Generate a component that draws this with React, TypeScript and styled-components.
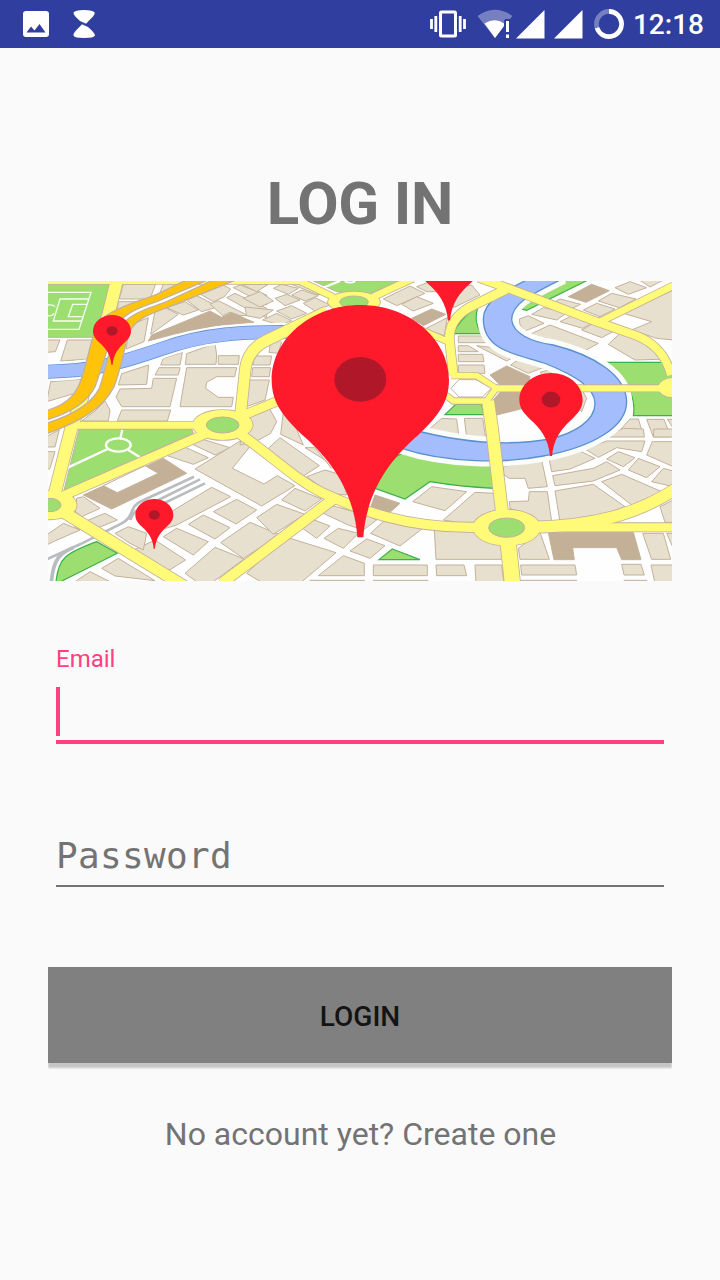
import React from 'react';
import styled, { createGlobalStyle } from 'styled-components';

const GlobalStyle = createGlobalStyle`
  body {
    margin: 0;
    background: #fafafa;
    font-family: Roboto, 'Liberation Sans', sans-serif;
  }
`;

const Screen = styled.div`
  display: flex;
  flex-direction: column;
  width: 720px;
  height: 1280px;
  background: #fafafa;
  overflow: hidden;
`;

const StatusBar = styled.header`
  display: flex;
  align-items: center;
  flex: none;
  height: 48px;
  padding: 0 16px 0 22px;
  box-sizing: border-box;
  background: #303f9f;
  color: #fff;
`;

const StatusIcon = styled.svg<{ $gap?: number }>`
  display: block;
  flex: none;
  margin-right: ${(p) => p.$gap ?? 0}px;
`;

const Spacer = styled.div`
  flex: 1;
`;

const Clock = styled.span`
  font-size: 28px;
  font-weight: 500;
  line-height: 48px;
  padding-top: 2px;
`;

const Form = styled.main`
  display: flex;
  flex-direction: column;
  padding: 116px 48px 0;
`;

const Title = styled.h1`
  margin: 0 0 37px;
  height: 80px;
  line-height: 80px;
  text-align: center;
  font-size: 60px;
  font-weight: 700;
  letter-spacing: -0.2px;
  color: #737373;
`;

const MapPicture = styled.svg`
  display: block;
  width: 624px;
  height: 300px;
`;

const Field = styled.label`
  display: flex;
  flex-direction: column;
  margin: 0 8px;
`;

const FloatingLabel = styled.span`
  margin-top: 64px;
  height: 28px;
  line-height: 28px;
  font-size: 24px;
  color: #ff4081;
`;

const ActiveInput = styled.div`
  height: 53px;
  margin-top: 14px;
  border-bottom: 4px solid #ff4081;
`;

const Caret = styled.div`
  width: 4px;
  height: 49px;
  background: #ff4081;
`;

const IdleInput = styled.div`
  height: 59px;
  margin-top: 82px;
  line-height: 60px;
  border-bottom: 2px solid #737373;
  font-family: 'DejaVu Sans Mono', monospace;
  font-size: 36px;
  letter-spacing: 0.33px;
  color: #737373;
`;

const LoginButton = styled.button`
  height: 96px;
  margin: 80px 0 0;
  padding: 3px 0 0;
  border: 0;
  background: #808080;
  box-shadow: 0 5px 2px 0 rgba(0, 0, 0, 0.21);
  clip-path: inset(0 0 -10px 0);
  font-family: inherit;
  font-size: 28px;
  font-weight: 500;
  color: #141414;
`;

const SignupLink = styled.p`
  margin: 50px 0 0;
  padding-left: 1px;
  line-height: 42px;
  text-align: center;
  font-size: 32px;
  color: #737373;
`;

/* Map drawing: three units per pixel, split in six areas. */

const LAND = '#e8e0cf';
const EDGE = '#c3b19b';
const ROAD = '#fffa78';
const PARK = '#9cdf70';
const PARK_EDGE = '#39b14a';
const BUILDING = '#c4b096';
const WATER = '#a3bdfd';
const WATER_EDGE = '#5b8fd0';
const RAIL = '#b9bdc0';

interface Area {
  x: number;
  y: number;
  blocks: string[];
  buildings: string[];
}

const areas: Area[] = [
  {
    x: 0,
    y: 0,
    blocks: [
      '250,27 347,27 330,72 238,72', '235,80 300,80 232,108', '370,27 440,27 358,58',
      '20,195 60,195 46,230 20,232', '82,195 165,195 150,252 62,258',
      '270,150 325,128 312,200 258,222', '345,108 375,98 415,118 332,178',
      '380,98 435,80 475,105 430,120', '440,76 470,62 535,95 485,110',
      '482,58 550,30 572,42 552,66 520,80', '580,38 600,30 680,60 680,90',
      '510,87 535,77 625,122 600,122 570,112 548,122', '560,68 585,55 680,100 680,128 650,118',
      '32,320 130,312 105,355 20,380', '245,296 326,270 320,328 235,330',
      '340,310 410,310 390,395 245,395 228,366 240,342 335,340',
      '357,278 420,278 415,300 345,300', '362,270 370,250 427,232 420,270',
      '440,236 525,206 530,240 528,268 436,268',
      '440,278 590,278 584,305 530,305 500,322 497,340 535,367 580,367 575,395 420,395',
      '245,405 392,405 382,438 232,438', '165,408 195,378 210,405 205,438 125,438',
      '535,242 598,242 595,268 535,268',
    ],
    buildings: ['325,198 335,180 510,108 545,127 575,113 642,142 530,152 400,178'],
  },
  {
    x: 0,
    y: 450,
    blocks: [
      '20,80 45,80 30,130 20,135', '20,35 58,14 45,66 20,66', '370,88 425,62 505,98 460,118',
      '445,52 485,42 570,68 525,90', '465,132 605,45 632,62 577,130 672,177 712,152 765,182 665,243',
      '385,265 515,187 572,215 410,300 370,312', '520,260 590,223 650,255 588,297',
      '445,298 490,270 570,308 525,342', '370,335 410,310 505,350 460,390',
      '630,292 720,330 610,400 542,353', '435,445 525,367 612,402 520,470 470,470',
      '185,430 235,400 345,467 225,453', '260,385 345,345 437,405 380,440',
      '150,283 195,265 232,285 150,318 100,308', '20,330 70,295 120,315 40,350 20,360',
      '110,220 130,215 180,250 125,275 105,258', '225,325 265,305 320,325 310,375 270,355',
      '105,470 150,440 210,470',
    ],
    buildings: ['130,210 370,100 440,145 215,252'],
  },
  {
    x: 630,
    y: 0,
    blocks: [
      '70,40 95,28 145,40 115,58', '-25,28 55,28 20,50', '-20,70 30,50 70,78 30,96',
      '75,70 110,58 150,75 105,92', '125,60 155,45 205,62 165,78', '110,22 150,22 230,60 200,58',
      '80,108 125,92 170,115 125,132', '160,85 195,68 240,90 195,108', '-15,96 70,105 30,130 -10,122',
      '38,135 80,115 125,137 90,150', '400,72 480,33 525,55 440,92', '455,88 500,65 550,85 490,108',
      '500,35 545,18 560,50 530,50', '615,40 665,30 690,60 610,98', '525,162 592,128 583,182',
      '62,200 95,200 85,235 57,232', '14,243 65,243 60,270 8,270', '8,278 62,278 58,305 5,305',
      '-20,315 58,315 45,375 -20,398', '-20,430 58,400 80,440 62,475 20,498 -30,510',
      '100,410 130,440 160,510 92,478', '535,465 575,430 620,432 627,487',
    ],
    buildings: ['485,130 545,102 587,118 520,152'],
  },
  {
    x: 630,
    y: 450,
    blocks: [
      '90,38 208,122 160,153 50,75', '165,68 195,68 245,130 225,105',
      '170,155 225,135 275,150 290,210 240,205', '95,225 135,190 215,222 165,258',
      '20,278 80,238 165,268 70,328',
      '155,308 180,280 240,303 200,340', '205,258 250,243 350,270 380,285 340,315 295,300',
      '222,340 265,310 325,325 280,370', '300,378 350,342 405,362 360,400',
      '362,325 405,285 518,310 450,363', '105,335 258,383 150,475 40,475 -10,445',
      '205,452 280,392 343,415 343,452', '370,420 532,420 532,452 370,452',
      '558,420 642,420 650,452 560,452', '553,315 680,323 758,365 758,403 558,403',
      '488,230 545,185 650,200 585,257', '580,285 675,202 733,205 737,255 680,280 670,300',
      '180,466 343,466 343,475 180,475', '370,466 534,466 534,475 370,475',
    ],
    buildings: ['375,210 450,235 420,262 360,252'],
  },
  {
    x: 1260,
    y: 0,
    blocks: [
      '465,38 510,20 560,38 505,58', '530,10 620,10 570,36', '415,78 455,55 528,72 478,98',
      '370,105 410,85 465,102 420,125', '525,98 640,45 640,195 590,190 515,165 575,140 490,115',
      '215,118 250,98 322,112 290,135', '262,92 300,72 362,88 325,105',
      '300,140 340,120 405,138 368,160', '365,165 400,145 468,165 425,188',
      '178,132 205,122 252,145 195,168 180,150', '210,178 270,150 415,205 360,235 290,205',
      '445,208 480,175 560,200 625,252 525,255', '50,212 120,220 172,240 140,258',
      '152,270 190,243 268,270 205,295', '240,292 285,280 350,315 380,370 365,410',
      '-5,183 80,183 95,203 -5,203', '-5,212 25,212 55,230 -5,230',
      '-5,238 68,238 72,260 -5,260', '-5,270 72,270 75,295 -5,295',
      '13,430 68,430 78,495 20,488', '480,465 510,432 535,432 552,486', '560,433 612,433 632,486 580,486',
      '622,433 640,433 640,460',
    ],
    buildings: [
      '325,65 395,28 448,47 378,82',
      '90,300 140,273 210,305 190,400 110,420 100,375 130,340',
    ],
  },
  {
    x: 1260,
    y: 450,
    blocks: [
      '430,36 490,10 550,12 553,36', '582,12 640,12 640,36 580,36',
      '130,125 245,105 262,185 205,190 195,160 148,160 132,150', '268,105 360,78 405,100 330,132 275,140',
      '278,152 400,130 440,110 480,135 400,168 285,182', '375,72 440,48 555,48 545,80 470,68 415,97',
      '440,102 475,80 525,98 490,125', '577,50 640,50 640,125 560,90',
      '505,135 535,100 600,125 560,158', '575,170 610,130 640,138 640,185',
      '425,170 485,148 605,200 515,240', '285,198 400,178 495,245 400,280 300,290',
      '148,230 205,228 208,200 262,200 275,290 240,290 150,250',
      '175,370 240,322 268,403 180,403', '45,420 125,420 132,475 48,475',
      '182,420 345,420 350,450 185,450', '485,418 543,418 553,450 492,450',
      '548,325 610,325 632,403 575,403', '620,325 640,325 640,370', '573,420 640,420 640,475 585,475',
      '600,245 640,225 640,292 615,292', '180,466 350,466 352,475 182,475', '492,466 560,466 562,475 494,475',
    ],
    buildings: ['265,322 520,322 543,404 485,404 470,368 338,368 343,404 282,404'],
  },
];

const roads: { d: string; w: number }[] = [
  { d: 'M20 18H780L880 66', w: 18 },
  { d: 'M232 10L205 120Q160 250 120 390L95 455L43 660', w: 36 },
  { d: 'M80 451H480', w: 20 },
  { d: 'M602 415L615 290Q620 225 680 196L860 110', w: 32 },
  { d: 'M600 425L720 375', w: 26 },
  { d: 'M500 475L70 662', w: 26 },
  { d: 'M60 705L440 938', w: 33 },
  { d: 'M590 470C700 545 760 610 850 655C960 705 1090 757 1290 757H1400', w: 28 },
  { d: 'M1480 757H1910', w: 25 },
  { d: 'M1470 757C1650 755 1790 720 1910 640', w: 34 },
  { d: 'M880 672L545 925', w: 30 },
  { d: 'M1344 378L1356 460L1387 720', w: 36 },
  { d: 'M1402 780L1418 930', w: 46 },
  { d: 'M1400 42L1290 96Q1222 135 1229 200L1240 300', w: 26 },
  { d: 'M1234 302H1310L1368 340L1340 378H1240L1210 355', w: 17 },
  { d: 'M1362 340H1900', w: 19 },
  { d: 'M1315 8L1400 38L1670 140L1790 182Q1872 215 1893 300', w: 24 },
  { d: 'M1680 140L1910 27', w: 20 },
  { d: 'M1000 65L1120 10', w: 20 },
  { d: 'M1120 155L1225 200', w: 18 },
];

const circles = [
  { x: 548, y: 450, rx: 90, ry: 45, ix: 49, iy: 24 },
  { x: 30, y: 690, rx: 80, ry: 43, ix: 33, iy: 20 },
  { x: 942, y: 81, rx: 78, ry: 31, ix: 43, iy: 18 },
  { x: 1400, y: 758, rx: 101, ry: 54, ix: 54, iy: 29 },
  { x: 1900, y: 338, rx: 45, ry: 29, ix: 0, iy: 0 },
];

function Pin({ x, y, s }: { x: number; y: number; s: number }) {
  return (
    <g transform={`translate(${x} ${y}) scale(${s})`}>
      <path
        d="M0 0C145 0 266 100 266 225C266 300 224 340 174 390C99 455 19 550 9 697H-9C-19 550 -99 455 -174 390C-224 340 -266 300 -266 225C-266 100 -145 0 0 0Z"
        fill="#ff1a2b"
      />
      <ellipse cx={0} cy={223} rx={78} ry={67} fill="#b0182a" />
    </g>
  );
}

function CityMap() {
  return (
    <MapPicture viewBox="24 18 1872 900" preserveAspectRatio="none">
      <rect x={24} y={18} width={1872} height={900} fill="#fefefe" />
      {areas.map((a, i) => (
        <g key={i} transform={`translate(${a.x} ${a.y})`} stroke={EDGE} strokeWidth={3}>
          {a.blocks.map((p) => (
            <polygon key={p} points={p} fill={LAND} />
          ))}
          {a.buildings.map((p) => (
            <polygon key={p} points={p} fill={BUILDING} />
          ))}
        </g>
      ))}
      <polygon points="190,632 315,572 355,595 232,653" fill="#fff" stroke={EDGE} strokeWidth={3} />

      <g fill={PARK} stroke={EDGE} strokeWidth={3}>
        <polygon points="20,27 212,27 165,187 20,187" />
        <polygon points="117,462 455,462 460,475 72,646" />
        <polygon points="820,18 1080,18 975,62 890,50" />
      </g>
      <g fill="none" stroke="#f4fff0" strokeWidth={4}>
        <path d="M24 52H153L117 163H24M145 72H60L40 138H125M140 88H98L85 125H128M24 90Q40 88 45 95M24 122Q35 125 42 115" />
      </g>
      <g fill="none" stroke="#fff" strokeWidth={7}>
        <ellipse cx={235} cy={510} rx={37} ry={20} />
        <path d="M247 464L241 490M85 577L203 522M265 525L300 547" />
        <path d="M840 42L900 18" />
      </g>
      <ellipse cx={930} cy={16} rx={15} ry={7} fill={WATER} stroke="#fff" strokeWidth={5} />
      <g fill={PARK} stroke={PARK_EDGE} strokeWidth={3.5}>
        <path d="M48 920C55 850 75 835 170 800L232 835L62 920Z" />
        <path d="M1240 176C1260 130 1290 115 1318 85C1300 130 1310 155 1325 176Z" />
        <polygon points="1560,12 1650,12 1460,106 1430,98 1490,60" />
        <path d="M1685 262H1880L1900 300V422H1780C1790 365 1755 300 1685 262Z" />
        <polygon points="1215,419 1247,388 1325,388 1332,419" />
        <path d="M1095 530C1160 550 1260 565 1357 568L1362 640Q1260 635 1170 620L1095 672L1005 640L1040 560Z" />
        <polygon points="1057,822 1140,854 1017,854" />
      </g>

      <g fill="none" stroke={RAIL} strokeWidth={8} strokeLinejoin="round">
        <path d="M20 853L120 808L245 745C285 725 265 695 305 678L462 605" />
        <path d="M270 735C280 705 300 700 325 690L480 613M320 710L495 625" />
        <path d="M34 922C40 850 60 835 100 818" strokeWidth={11} />
      </g>

      <g fill="none">
        <path d="M10 290C150 290 240 265 370 220C490 178 600 168 800 172" stroke="#fdfefe" strokeWidth={56} />
        <path d="M10 290C150 290 240 265 370 220C490 178 600 168 800 172" stroke={WATER_EDGE} strokeWidth={42} />
        <path d="M10 290C150 290 240 265 370 220C490 178 600 168 800 172" stroke={WATER} strokeWidth={38} />
      </g>
      {[
        { stroke: '#fbfdfb', w: 34 },
        { stroke: WATER_EDGE, w: 4 },
      ].map((s) => (
        <path
          key={s.w}
          d="M1470 10C1400 45 1330 75 1330 132C1330 235 1450 240 1520 267C1600 300 1664 335 1665 385C1665 440 1600 475 1530 492C1400 515 1250 500 1110 462L1085 520C1220 565 1400 565 1510 543C1660 515 1760 455 1760 380C1758 300 1660 240 1540 210C1470 200 1420 175 1415 135C1415 85 1470 60 1570 10Z"
          fill={WATER}
          stroke={s.stroke}
          strokeWidth={s.w}
        />
      ))}

      <g fill="none" stroke={EDGE}>
        {roads.map((r) => (
          <path key={r.d} d={r.d} strokeWidth={r.w + 5} />
        ))}
      </g>
      {circles.map((c) => (
        <ellipse key={c.x} cx={c.x} cy={c.y} rx={c.rx + 2.5} ry={c.ry + 2.5} fill={EDGE} />
      ))}
      <g fill="none" stroke={ROAD}>
        {roads.map((r) => (
          <path key={r.d} d={r.d} strokeWidth={r.w} />
        ))}
      </g>
      {circles.map((c) => (
        <g key={c.x}>
          <ellipse cx={c.x} cy={c.y} rx={c.rx} ry={c.ry} fill={ROAD} />
          <ellipse cx={c.x} cy={c.y} rx={c.ix} ry={c.iy} fill={PARK} stroke={EDGE} strokeWidth={3} />
        </g>
      ))}
      <polygon points="1233,340 1257,314 1308,314 1354,340 1327,366 1257,366" fill="#fff" stroke={EDGE} strokeWidth={3} />

      <g fill="#ffc40a" stroke={EDGE} strokeWidth={4}>
        <path d="M15 408C90 388 112 350 127 305C150 235 155 155 195 125C240 92 300 78 350 58L445 12H510L350 80C290 100 240 120 218 170C200 230 185 280 165 335C140 385 90 415 15 436Z" />
        <path d="M15 446C100 420 155 385 178 340C200 280 210 190 245 150C280 110 330 100 380 80L530 10H600L380 98C320 120 280 135 262 185C250 240 240 290 222 335C190 400 120 440 15 478Z" />
      </g>

      <Pin x={1227} y={-112} s={0.357} />
      <Pin x={216} y={120} s={0.214} />
      <Pin x={343} y={672} s={0.214} />
      <Pin x={1533} y={294} s={0.357} />
      <Pin x={961} y={90} s={1} />
    </MapPicture>
  );
}

export default function App() {
  return (
    <>
      <GlobalStyle />
      <Screen>
        <StatusBar>
          <StatusIcon $gap={22} width={28} height={28} viewBox="0 0 28 28">
            <path
              fillRule="evenodd"
              fill="#fff"
              d="M4 1H24Q27 1 27 4V24Q27 27 24 27H4Q1 27 1 24V4Q1 1 4 1ZM4.500 22.500H23.500L17.500 14L12.500 20.500L9 16.500Z"
            />
          </StatusIcon>
          <StatusIcon width={24} height={30} viewBox="0 0 24 30">
            <path
              fill="#fff"
              d="M14 14.700L8 12Q1.200 6 1.500 3.500Q3 1 12 1T22.700 3.500Q23 5 21 7.500Z"
            />
            <path
              fill="#fff"
              d="M10 15.300L16 18Q23 24 23 26.500Q22 29 12 29T1.500 26.500Q1 25 3.500 22Z"
            />
          </StatusIcon>
          <Spacer />
          <StatusIcon $gap={11} width={36} height={28} viewBox="0 0 36 28">
            <rect x={10.500} y={2} width={15} height={24} rx={1} fill="none" stroke="#fff" strokeWidth={3} />
            <path d="M1.500 9V19M5.800 6V22M30.200 6V22M34.500 9V19" stroke="#fff" strokeWidth={2.800} />
          </StatusIcon>
          <StatusIcon $gap={3} width={36} height={30} viewBox="0 0 36 30">
            <path d="M.5 7Q18 -5.500 35.500 7L33 10H28V16L18 29Z" fill="#7680c0" />
            <path d="M7.500 14.500Q18 8 27 14.500V17L18 29Z" fill="#fff" />
            <path d="M27 11H33V30H27Z" fill="#303f9f" />
            <path d="M30.500 12V23M30.500 25.500V29" stroke="#fff" strokeWidth={3} />
          </StatusIcon>
          <StatusIcon $gap={9} width={29} height={29} viewBox="0 0 29 29">
            <path d="M0 28.500L28.500 0V28.500Z" fill="#fff" />
          </StatusIcon>
          <StatusIcon $gap={11} width={29} height={29} viewBox="0 0 29 29">
            <path d="M0 28.500L28.500 0V28.500Z" fill="#fff" />
          </StatusIcon>
          <StatusIcon $gap={9} width={30} height={30} viewBox="0 0 30 30">
            <circle cx={15} cy={15} r={12.600} fill="none" stroke="#7680c0" strokeWidth={4.600} />
            <path d="M15 2.400A12.600 12.600 0 1 1 3 18.900" fill="none" stroke="#fff" strokeWidth={4.600} />
          </StatusIcon>
          <Clock>12:18</Clock>
        </StatusBar>
        <Form>
          <Title>LOG IN</Title>
          <CityMap />
          <Field>
            <FloatingLabel>Email</FloatingLabel>
            <ActiveInput>
              <Caret />
            </ActiveInput>
          </Field>
          <Field>
            <IdleInput>Password</IdleInput>
          </Field>
          <LoginButton>LOGIN</LoginButton>
          <SignupLink>No account yet? Create one</SignupLink>
        </Form>
      </Screen>
    </>
  );
}
